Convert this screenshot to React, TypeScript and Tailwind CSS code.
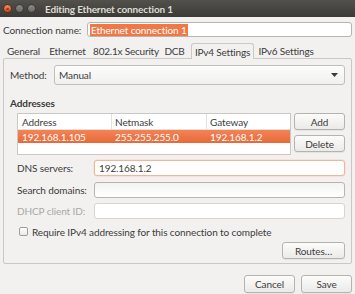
import { useState } from "react";

function Btn({ text, className }: { text: string; className: string }) {
  return (
    <div
      className={`flex items-center justify-center rounded-[3px] border border-[#b4b3b0] bg-gradient-to-b from-[#fcfcfb] to-[#ebeae8] text-[#3c3c3c] shadow-[0_1px_0_rgba(0,0,0,0.05)] ${className}`}
    >
      {text}
    </div>
  );
}

function Field({ value, className }: { value?: string; className: string }) {
  return (
    <div className={`flex items-center rounded-[3px] border bg-white px-[4px] ${className}`}>
      {value}
    </div>
  );
}

const tabs = [
  { label: "General", w: "w-[41px]" },
  { label: "Ethernet", w: "w-[47px]" },
  { label: "802.1x Security", w: "w-[70px]" },
  { label: "DCB", w: "w-[27px]" },
];

export default function App() {
  const [checked] = useState(false);

  return (
    <div className="w-[355px] h-[294px] overflow-hidden bg-[#f2f1f0] text-[10px] tracking-[-0.1px] text-[#3c3c3c] font-['Lato','Open_Sans',sans-serif] leading-none">
      {/* title bar */}
      <div className="h-[17px] flex items-center bg-gradient-to-b from-[#52514c] to-[#3b3a36] pl-[3px]">
        <div className="w-[9px] h-[9px] rounded-full bg-gradient-to-b from-[#f58a5e] to-[#df4a16] border border-[#5a3020] flex items-center justify-center text-[6px] text-[#5a2810] font-bold">
          ×
        </div>
        <div className="ml-[3px] w-[9px] h-[9px] rounded-full bg-gradient-to-b from-[#8a8984] to-[#6c6b66] border border-[#3a3935]" />
        <div className="ml-[3px] w-[9px] h-[9px] rounded-full bg-gradient-to-b from-[#8a8984] to-[#6c6b66] border border-[#3a3935]" />
        <span className="ml-[9px] text-[10px] tracking-[-0.15px] font-bold text-[#dfdbd2]">Editing Ethernet connection 1</span>
      </div>

      <div className="px-[3px]">
        {/* connection name */}
        <div className="mt-[5px] flex items-center h-[15px]">
          <span className="w-[84px]">Connection name:</span>
          <div className="flex-1 h-[15px] rounded-[3px] border border-[#b6b5b1] bg-white flex items-center px-[2px]">
            <span className="bg-[#f07746] text-white px-[1px] h-[12px] flex items-center">Ethernet connection 1</span>
          </div>
        </div>

        {/* tabs */}
        <div className="mt-[5px] flex items-end h-[16px] tracking-[-0.2px]">
          {tabs.map((t) => (
            <div key={t.label} className={`h-[15px] flex items-center justify-center whitespace-nowrap ${t.w}`}>
              {t.label}
            </div>
          ))}
          <div className="ml-[3px] w-[63px] h-[16px] flex items-center justify-center whitespace-nowrap border border-b-0 border-[#c9c8c5] rounded-t-[3px] bg-[#f2f1f0] relative top-[1px] z-10">
            IPv4 Settings
          </div>
          <div className="w-[64px] h-[15px] flex items-center justify-center whitespace-nowrap">IPv6 Settings</div>
        </div>

        {/* panel */}
        <div className="h-[206px] border border-[#c9c8c5] rounded-[2px] pl-[6px] pr-[6px] flex flex-col">
          <div className="mt-[6px] flex items-center h-[20px]">
            <span className="w-[44px]">Method:</span>
            <div className="flex-1 h-[20px] rounded-[3px] border border-[#c0bfbc] bg-gradient-to-b from-[#fdfdfd] to-[#f1f0ef] flex items-center px-[4px] justify-between">
              <span>Manual</span>
              <svg width="7" height="4" viewBox="0 0 7 4" className="mr-[2px]">
                <path d="M0 0h7L3.5 4z" fill="#3c3c3c" />
              </svg>
            </div>
          </div>

          <div className="mt-[13px] font-bold">Addresses</div>

          <div className="mt-[5px] flex pl-[7px]">
            <div className="w-[275px] h-[42px] border border-[#c9c8c5] bg-white flex flex-col">
              <div className="h-[16px] flex border-b border-[#e2e1df]">
                <div className="w-[94px] border-r border-[#e2e1df] flex items-center pl-[4px]">Address</div>
                <div className="w-[95px] border-r border-[#e2e1df] flex items-center pl-[3px]">Netmask</div>
                <div className="flex-1 flex items-center pl-[3px]">Gateway</div>
              </div>
              <div className="h-[13px] flex bg-gradient-to-b from-[#f28456] to-[#e8693a] text-white">
                <div className="w-[94px] flex items-center pl-[4px]">192.168.1.105</div>
                <div className="w-[95px] flex items-center pl-[3px]">255.255.255.0</div>
                <div className="flex-1 flex items-center pl-[3px]">192.168.1.2</div>
              </div>
            </div>
            <div className="ml-[3px] flex flex-col">
              <Btn text="Add" className="w-[51px] h-[17px]" />
              <Btn text="Delete" className="mt-[5px] w-[51px] h-[17px]" />
            </div>
          </div>

          <div className="mt-[5px] pl-[7px] flex flex-col gap-[5px]">
            <div className="flex items-center h-[16px]">
              <span className="w-[77px]">DNS servers:</span>
              <Field value="192.168.1.2" className="flex-1 h-[16px] border-[#f0b59c] shadow-[0_0_0_0.5px_#f7d3c3]" />
            </div>
            <div className="flex items-center h-[16px] mt-[1px]">
              <span className="w-[77px]">Search domains:</span>
              <Field className="flex-1 h-[16px] border-[#b6b5b1] bg-gradient-to-b from-[#f3f3f2] to-[#ffffff]" />
            </div>
            <div className="flex items-center h-[16px]">
              <span className="w-[77px] text-[#a9a8a5]">DHCP client ID:</span>
              <Field className="flex-1 h-[16px] border-[#d6d5d2] bg-[#f5f5f4]" />
            </div>
          </div>

          <div className="mt-[8px] pl-[9px] flex items-center h-[9px]">
            <div className={`w-[9px] h-[9px] rounded-[2px] border border-[#9e9d9a] bg-gradient-to-b from-[#fefefe] to-[#ebeae8] ${checked ? "" : ""}`} />
            <span className="ml-[4px]">Require IPv4 addressing for this connection to complete</span>
          </div>

          <div className="mt-[6px] flex justify-end">
            <Btn text="Routes…" className="w-[63px] h-[17px]" />
          </div>
        </div>

        {/* bottom buttons */}
        <div className="mt-[11px] flex justify-end gap-[6px]">
          <Btn text="Cancel" className="w-[51px] h-[18px]" />
          <Btn text="Save" className="w-[51px] h-[18px]" />
        </div>
      </div>
    </div>
  );
}
